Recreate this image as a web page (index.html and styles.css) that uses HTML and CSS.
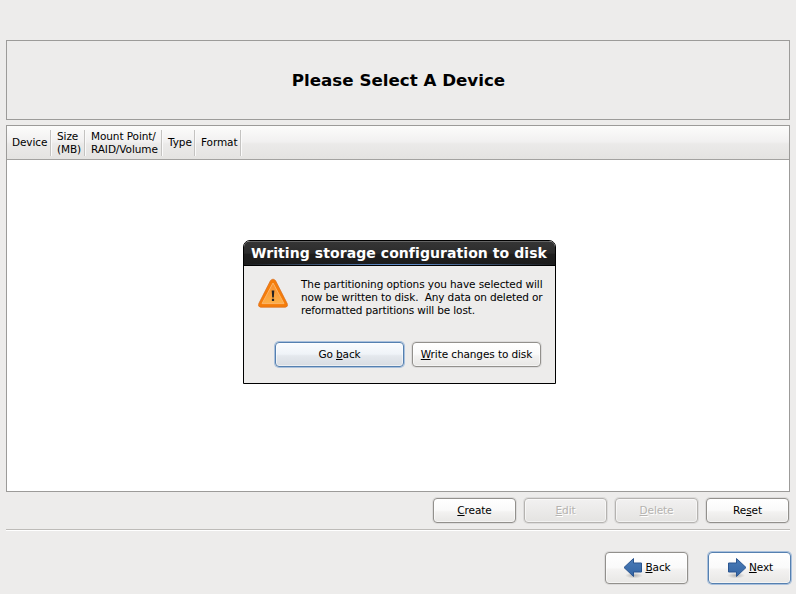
FILE: index.html
```html
<!DOCTYPE html>
<html lang="en">
<head>
<meta charset="utf-8">
<title>Please Select A Device</title>
<link rel="stylesheet" href="styles.css">
</head>
<body>
<main class="installer">
  <header class="banner"><h1>Please Select A Device</h1></header>
  <section class="devices">
    <div class="columns">
      <div class="col device"><span>Device</span></div>
      <div class="col size"><span>Size<br>(MB)</span></div>
      <div class="col mount"><span>Mount Point/<br>RAID/Volume</span></div>
      <div class="col type"><span>Type</span></div>
      <div class="col format"><span>Format</span></div>
    </div>
  </section>
  <div class="actions">
    <button class="btn"><span><u>C</u>reate</span></button>
    <button class="btn" disabled><span><u>E</u>dit</span></button>
    <button class="btn" disabled><span><u>D</u>elete</span></button>
    <button class="btn"><span>Re<u>s</u>et</span></button>
  </div>
  <hr>
  <nav class="steps">
    <button class="btn"><svg class="arrow" viewBox="0 0 20 22"><use href="#arrow-left"/></svg><span><u>B</u>ack</span></button>
    <button class="btn focus"><svg class="arrow" viewBox="0 0 20 22"><use href="#arrow-left" transform="translate(20 0) scale(-1 1)"/></svg><span><u>N</u>ext</span></button>
  </nav>
</main>

<div class="dialog" role="dialog" aria-labelledby="dialog-title">
  <h2 id="dialog-title"><span>Writing storage configuration to disk</span></h2>
  <div class="message">
    <svg class="warning" viewBox="0 0 30 30">
      <defs>
        <linearGradient id="amber" x1="0" y1="0" x2="0" y2="1"><stop offset="0" stop-color="#f98f2c"/><stop offset="1" stop-color="#fdb048"/></linearGradient>
      </defs>
      <path d="M15 1.2 Q16.6 1.2 17.6 2.8 L29.2 25.6 Q30.2 29 27.4 29.2 H2.6 Q-.2 29 .8 25.6 L12.4 2.8 Q13.4 1.2 15 1.2Z" fill="#f57d0a" stroke="#dc7424" stroke-width=".8"/>
      <path d="M15 5 L26 25.6 H4Z" fill="url(#amber)" stroke="#fcb468" stroke-linejoin="round"/>
      <path d="M13.7 12.6 h2.6 l-.5 6.8 h-1.6Z M13.9 20.8 h2.2 v2.2 h-2.2Z" fill="#222"/>
    </svg>
    <p>The partitioning options you have selected will<br><span class="l2">now be written to disk.&nbsp; Any data on deleted or</span><br><span class="l3">reformatted partitions will be lost.</span></p>
  </div>
  <div class="choices">
    <button class="btn focus"><span>Go <u>b</u>ack</span></button>
    <button class="btn"><span><u>W</u>rite changes to disk</span></button>
  </div>
</div>

<svg class="symbols" aria-hidden="true">
  <defs>
    <linearGradient id="blue" x1="0" y1="0" x2="0" y2="1"><stop offset="0" stop-color="#4a7cb8"/><stop offset="1" stop-color="#3465a4"/></linearGradient>
    <radialGradient id="shade"><stop offset="0" stop-color="#000" stop-opacity=".25"/><stop offset="1" stop-color="#000" stop-opacity="0"/></radialGradient>
    <g id="arrow-left">
      <ellipse cx="11" cy="18.5" rx="9" ry="3" fill="url(#shade)"/>
      <path d="M1 10.5 L10.5 1.5 V6 H18.5 V15 H10.5 V19.5Z" fill="url(#blue)" stroke="#2a5590" stroke-linejoin="round"/>
    </g>
  </defs>
</svg>
</body>
</html>
```
FILE: styles.css
```css
* { box-sizing: border-box; }

body {
  margin: 0;
  height: 594px;
  overflow: hidden;
  background: #edeceb;
  color: #000;
  font: 10.5px/13px "DejaVu Sans", sans-serif;
  letter-spacing: -.09px;
}

h1, h2, p { margin: 0; }

.installer {
  display: flex;
  flex-direction: column;
  padding: 40px 6px 0;
}

.banner {
  display: flex;
  align-items: center;
  justify-content: center;
  height: 80px;
  padding: 0 0 0 1px;
  border: 1px solid #9c9b99;
}

.banner h1 { font-size: 16.7px; line-height: 20px; letter-spacing: 0; }

.devices {
  height: 367px;
  margin-top: 5px;
  border: 1px solid #9c9b99;
  background: #fff;
}

.columns {
  display: flex;
  height: 34px;
  padding: 4px 0 3px;
  border-bottom: 1px solid #a3a2a0;
  background: linear-gradient(#fcfcfb, #f1f0f0 48%, #ebeae9 54%, #e4e3e1);
}

.col {
  display: flex;
  align-items: center;
  padding-left: 6px;
  border-right: 1px solid #c4c3c1;
  box-shadow: 1px 0 #fafafa;
  white-space: nowrap;
}

.device { width: 44px; padding: 0 0 1px 5px; }
.size { width: 34px; }
.mount { width: 77px; }
.type { width: 33px; padding-bottom: 1px; }
.format { width: 46px; padding-bottom: 1px; }

.actions {
  display: flex;
  justify-content: flex-end;
  gap: 8px;
  margin: 6px 1px 0 0;
}

.btn {
  display: flex;
  align-items: center;
  justify-content: center;
  width: 83px;
  height: 25px;
  padding: 0 0 1px;
  border: 1px solid #92908c;
  border-radius: 4px;
  background: linear-gradient(#fff, #fafafa 48%, #f3f2f1 56%, #e8e7e5);
  box-shadow: inset 0 0 0 1px #fff8, 0 0 0 1px #9993;
  color: #000;
  font: inherit;
  letter-spacing: -.1px;
  white-space: nowrap;
}

.btn u { text-underline-offset: 1px; text-decoration-thickness: 1px; text-decoration-skip-ink: none; }

.btn:disabled {
  border-color: #b5b3b0;
  background: linear-gradient(#f2f1f1, #e4e3e1);
  color: #b5b3b0;
  text-shadow: 1px 1px #fff;
}

.btn.focus {
  border-color: #5580b0;
  background: linear-gradient(#fafcfe, #eff3f8 48%, #e4e8ed 56%, #d8dce2);
  box-shadow: inset 0 0 0 1px #fff8, 0 0 0 1px #a9c0dc;
}

hr {
  width: 100%;
  height: 2px;
  margin: 6px 0 0;
  border: 0;
  border-top: 1px solid #bdbbb8;
  border-bottom: 1px solid #fff;
}

.steps {
  display: flex;
  justify-content: flex-end;
  gap: 20px;
  margin: 21px -1px 0 0;
}

.steps .btn { width: 83px; height: 32px; padding-left: 1px; }
.steps .focus { background: linear-gradient(#fff, #fafafa 48%, #f3f2f1 56%, #e8e7e5); }
.arrow { width: 20px; height: 22px; margin: 1px 2px 0 0; }

.dialog {
  position: absolute;
  left: 243px;
  top: 240px;
  width: 313px;
  height: 144px;
  border: 1px solid #000;
  border-radius: 7px 7px 0 0;
  background: #edeceb;
  overflow: hidden;
}

.dialog h2 {
  height: 25px;
  padding-left: 7px;
  border-bottom: 1px solid #000;
  background:
    linear-gradient(90deg, #1c1c1c, #5f8bc8 45%, #5f8bc8 55%, #1c1c1c) bottom / 100% 1px no-repeat,
    linear-gradient(#646464 0 1px, #353535 1px, #2c2c2c 50%, #1f1f1f 56%, #1c1c1c);
  color: #fff;
  font-size: 14px;
  line-height: 25px;
  letter-spacing: .07px;
  white-space: nowrap;
}

.message {
  display: flex;
  gap: 13px;
  padding: 12px 0 0 14px;
}

.warning { width: 30px; height: 30px; flex: none; }
.message p { white-space: nowrap; }
.l2 { letter-spacing: -.13px; }
.l3 { letter-spacing: -.14px; }

.choices {
  display: flex;
  gap: 8px;
  margin: 25px 0 0 31px;
}

.choices .btn { width: 129px; height: 25px; }
.symbols { position: absolute; width: 0; height: 0; }
```
